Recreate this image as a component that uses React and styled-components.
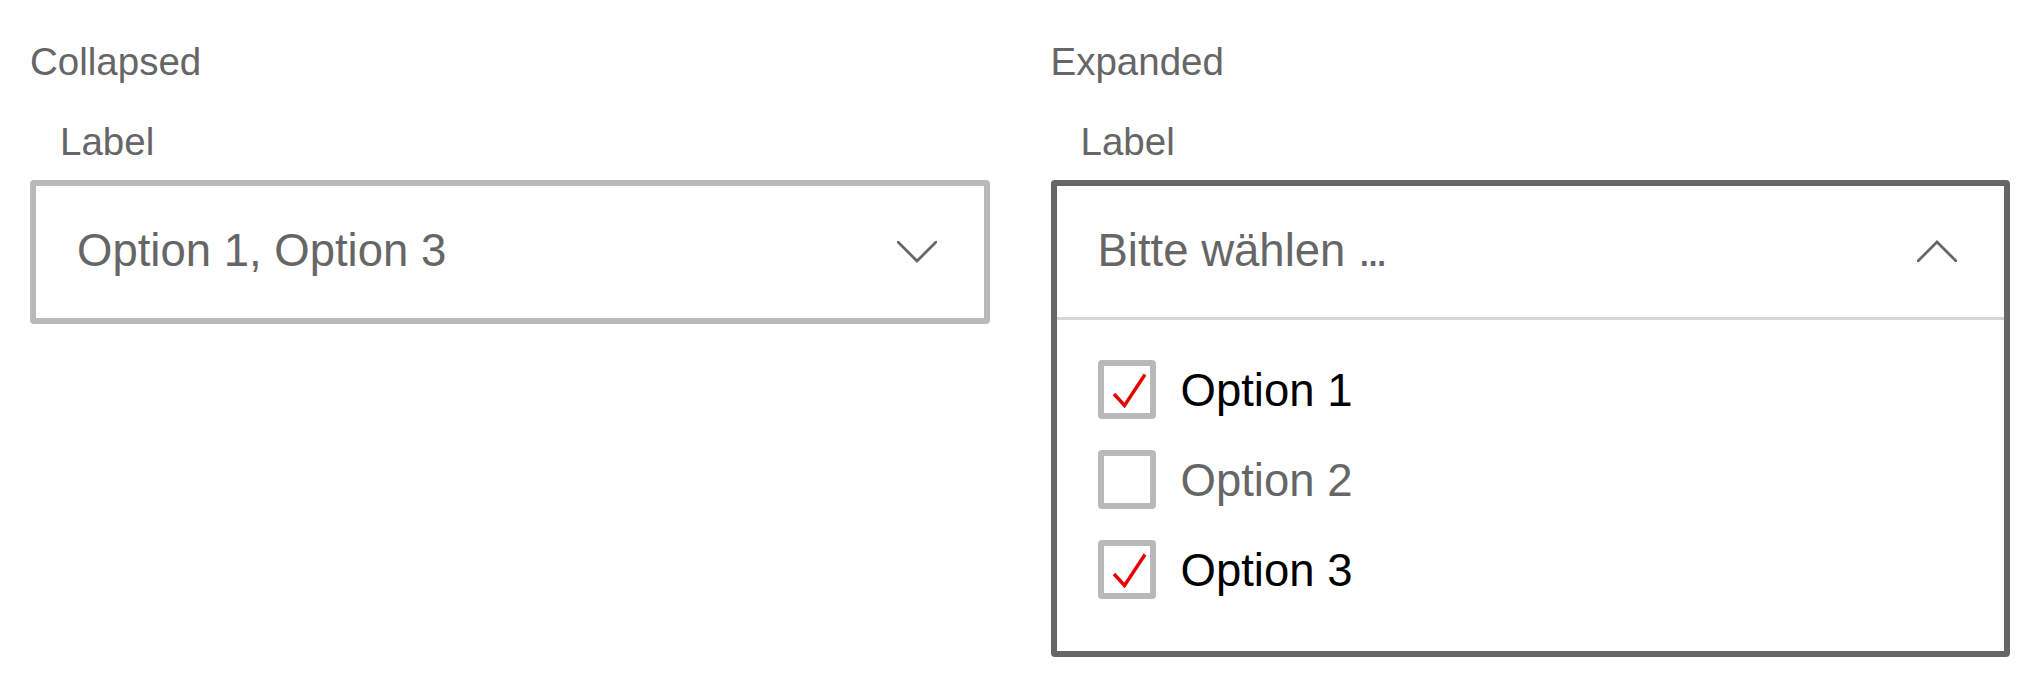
import React from "react";
import styled, { createGlobalStyle } from "styled-components";

const GlobalStyle = createGlobalStyle`
  html, body {
    margin: 0;
    padding: 0;
    background: #ffffff;
  }
  body {
    font-family: "Liberation Sans", Arial, Helvetica, sans-serif;
    -webkit-font-smoothing: antialiased;
  }
`;

const Page = styled.div`
  display: grid;
  grid-template-columns: 1fr 1fr;
  column-gap: 61px;
  padding: 40px 30px 0 30px;
  align-items: start;
`;

const Column = styled.section`
  display: flex;
  flex-direction: column;
`;

const SectionTitle = styled.div`
  font-size: 38.5px;
  line-height: 1.15;
  color: #666666;
  margin-bottom: 35.5px;
`;

const FieldLabel = styled.label`
  font-size: 38.5px;
  line-height: 1.15;
  color: #666666;
  margin-left: 30px;
  margin-bottom: 15.5px;
`;

const SelectBox = styled.div`
  border: 6px solid ${(p) => (p.$open ? "#666666" : "#b9b9b9")};
  border-radius: 4px;
  background: #ffffff;
  display: flex;
  flex-direction: column;
`;

const Trigger = styled.div`
  display: flex;
  align-items: center;
  justify-content: space-between;
  height: ${(p) => (p.$open ? "131px" : "132px")};
  padding: 0 47px 0 41px;
  border-bottom: ${(p) => (p.$open ? "3px solid #d6d6d6" : "none")};
`;

const Value = styled.span`
  font-size: 45.5px;
  line-height: 1.15;
  color: #666666;
`;

const Dots = styled.span`
  letter-spacing: -4px;
`;

const Chevron = styled.svg`
  width: 40px;
  height: 22px;
  display: block;
  flex: none;
`;

const OptionList = styled.ul`
  list-style: none;
  margin: 0;
  padding: 24.5px 41px 36.5px 41px;
  display: flex;
  flex-direction: column;
`;

const OptionRow = styled.li`
  display: flex;
  align-items: center;
  height: 90px;
  gap: 25px;
`;

const Box = styled.span`
  box-sizing: border-box;
  width: 58px;
  height: 59px;
  border: 6px solid #b9b9b9;
  border-radius: 4px;
  background: #ffffff;
  flex: none;
  position: relative;
`;

const Check = styled.svg`
  position: absolute;
  left: -6px;
  top: -6px;
  width: 58px;
  height: 59px;
`;

const OptionText = styled.span`
  font-size: 45.5px;
  line-height: 1.15;
  margin-top: 5px;
  color: ${(p) => (p.$checked ? "#000000" : "#666666")};
`;

function ChevronIcon({ up }) {
  return (
    <Chevron viewBox="0 0 40 22" fill="none">
      <polyline
        points={up ? "1,21 20,2 39,21" : "1,1 20,20 39,1"}
        stroke="#666666"
        strokeWidth="2.8"
        strokeLinecap="round"
        strokeLinejoin="miter"
      />
    </Chevron>
  );
}

function Checkbox({ checked }) {
  return (
    <Box>
      {checked && (
        <Check viewBox="0 0 58 59" fill="none">
          <polyline
            points="16,34 26.5,45.5 47,14.5"
            stroke="#e60000"
            strokeWidth="3.4"
            strokeLinecap="butt"
            strokeLinejoin="miter"
          />
        </Check>
      )}
    </Box>
  );
}

const options = [
  { label: "Option 1", checked: true },
  { label: "Option 2", checked: false },
  { label: "Option 3", checked: true },
];

export default function App() {
  return (
    <>
      <GlobalStyle />
      <Page>
        <Column>
          <SectionTitle>Collapsed</SectionTitle>
          <FieldLabel>Label</FieldLabel>
          <SelectBox>
            <Trigger>
              <Value>Option 1, Option 3</Value>
              <ChevronIcon />
            </Trigger>
          </SelectBox>
        </Column>
        <Column>
          <SectionTitle>Expanded</SectionTitle>
          <FieldLabel>Label</FieldLabel>
          <SelectBox $open>
            <Trigger $open>
              <Value>
                Bitte wählen <Dots>...</Dots>
              </Value>
              <ChevronIcon up />
            </Trigger>
            <OptionList>
              {options.map((o) => (
                <OptionRow key={o.label}>
                  <Checkbox checked={o.checked} />
                  <OptionText $checked={o.checked}>{o.label}</OptionText>
                </OptionRow>
              ))}
            </OptionList>
          </SelectBox>
        </Column>
      </Page>
    </>
  );
}
